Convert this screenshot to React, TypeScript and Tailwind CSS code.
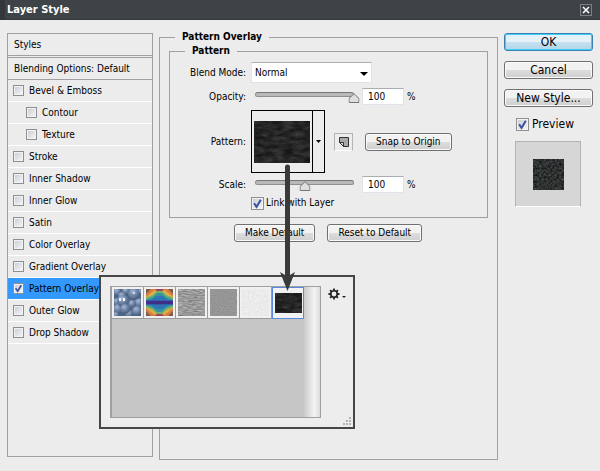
import { useState } from "react";
import type { ReactNode } from "react";

type Effect = { name: string; on?: boolean; nested?: boolean };

const effects: Effect[] = [
  { name: "Bevel & Emboss" },
  { name: "Contour", nested: true },
  { name: "Texture", nested: true },
  { name: "Stroke" },
  { name: "Inner Shadow" },
  { name: "Inner Glow" },
  { name: "Satin" },
  { name: "Color Overlay" },
  { name: "Gradient Overlay" },
  { name: "Pattern Overlay", on: true },
  { name: "Outer Glow" },
  { name: "Drop Shadow" },
];

const patterns = ["bubbles", "tiedye", "woven", "grain", "paper", "leather"];

/* Noise filters shared by all the swatches */
function TextureDefs() {
  return (
    <svg className="absolute size-0" aria-hidden="true">
      <defs>
        <filter id="leatherNoise" x="0" y="0" width="1" height="1" colorInterpolationFilters="sRGB">
          <feTurbulence type="fractalNoise" baseFrequency="0.1 0.25" numOctaves="4" seed="4" />
          <feColorMatrix values="0.22 0 0 0 0.04  0.22 0 0 0 0.04  0.22 0 0 0 0.04  0 0 0 0 1" />
        </filter>
        <filter id="speckNoise" x="0" y="0" width="1" height="1" colorInterpolationFilters="sRGB">
          <feTurbulence type="fractalNoise" baseFrequency="0.45" numOctaves="3" seed="9" />
          <feColorMatrix values="0.36 0 0 0 0  0.36 0 0 0 0.01  0.36 0 0 0 0.01  0 0 0 0 1" />
        </filter>
        <filter id="wovenNoise" x="0" y="0" width="1" height="1" colorInterpolationFilters="sRGB">
          <feTurbulence type="fractalNoise" baseFrequency="0.2 0.8" numOctaves="2" seed="2" />
          <feColorMatrix values="0.4 0 0 0 0.4  0.4 0 0 0 0.4  0.4 0 0 0 0.4  0 0 0 0 1" />
        </filter>
        <filter id="grainNoise" x="0" y="0" width="1" height="1" colorInterpolationFilters="sRGB">
          <feTurbulence type="fractalNoise" baseFrequency="0.8" numOctaves="2" seed="3" />
          <feColorMatrix values="0.15 0 0 0 0.51  0.15 0 0 0 0.51  0.15 0 0 0 0.51  0 0 0 0 1" />
        </filter>
        <filter id="paperNoise" x="0" y="0" width="1" height="1" colorInterpolationFilters="sRGB">
          <feTurbulence type="fractalNoise" baseFrequency="0.5" numOctaves="2" seed="6" />
          <feColorMatrix values="0.1 0 0 0 0.87  0.1 0 0 0 0.87  0.1 0 0 0 0.87  0 0 0 0 1" />
        </filter>
        <radialGradient id="bubble" cx="0.4" cy="0.3" r="0.7">
          <stop offset="0" stopColor="#a3b9d6" />
          <stop offset="0.45" stopColor="#7389ab" />
          <stop offset="1" stopColor="#46597a" />
        </radialGradient>
        <filter id="dyeBleed" x="-0.2" y="-0.2" width="1.4" height="1.4">
          <feGaussianBlur stdDeviation="0.6" />
        </filter>
      </defs>
    </svg>
  );
}

function Leather({ className }: { className: string }) {
  return (
    <svg className={className} aria-hidden="true">
      <rect width="100%" height="100%" filter="url(#leatherNoise)" />
    </svg>
  );
}

function Bubbles() {
  const balls = [
    [3, 3, 4], [12, 2, 4], [8, 7, 4], [25, 14, 5], [3, 13, 4], [26, 3, 3], [20, 5, 6],
    [4, 20, 5], [18, 15, 4], [23, 22, 5], [15, 25, 4], [9, 12, 6], [11, 20, 5], [2, 26, 3],
  ];
  return (
    <svg viewBox="0 0 27 27" className="size-[27px]" aria-hidden="true">
      <rect width="27" height="27" fill="#4f6484" />
      {balls.map(([x, y, r], i) => (
        <circle key={i} cx={x} cy={y} r={r} fill="url(#bubble)" />
      ))}
      <rect x="5" y="9" width="2" height="3" fill="#e4eefb" />
      <rect x="9" y="9" width="2" height="3" fill="#fff" />
      <rect x="19" y="3" width="2" height="2" fill="#c9daf0" />
    </svg>
  );
}

function TieDye() {
  return (
    <svg viewBox="0 0 27 27" className="size-[27px]" aria-hidden="true">
      <rect width="27" height="27" fill="#74604c" />
      <g filter="url(#dyeBleed)">
        <path d="M9 0h9l-4.500 3zM9 27h9l-4.500-3z" fill="#9c4658" />
        <path d="M-1 6 5 0h4l3 3-4 4-9 4zM28 6l-6-6h-4l-3 3 4 4 9 4zM-1 21l6 6h4l3-3-4-4-9-4zM28 21l-6 6h-4l-3-3 4-4 9-4z" fill="#dc7a42" />
        <path d="M0 8 6 3l3-2 2 2-4 4-7 4zM27 8l-6-5-3-2-2 2 4 4 7 4zM0 19l6 5 3 2 2-2-4-4-7-4zM27 19l-6 5-3 2-2-2 4-4 7-4z" fill="#dcb048" />
        <path d="M-1 9 7 6l4-4h5l4 4 8 3v9l-8 3-4 4h-5l-4-4-8-3z" fill="#6fae72" />
        <path d="M-1 11 7 8l4-4h5l4 4 8 3v5l-8 3-4 4h-5l-4-4-8-3z" fill="#36959e" />
        <path d="m5 11 5-4h7l5 4v5l-5 4h-7l-5-4z" fill="#2f74b8" />
      </g>
      <rect y="11" width="27" height="5" fill="#3560a8" />
      <rect y="12" width="27" height="3" fill="#3f2f88" />
    </svg>
  );
}

function Noise({ filter }: { filter: string }) {
  return (
    <svg className="size-[27px]" aria-hidden="true">
      <rect width="27" height="27" filter={`url(#${filter})`} />
    </svg>
  );
}

function Thumbnail({ name }: { name: string }) {
  if (name === "bubbles") return <Bubbles />;
  if (name === "tiedye") return <TieDye />;
  if (name === "woven") return <Noise filter="wovenNoise" />;
  if (name === "grain") return <Noise filter="grainNoise" />;
  if (name === "paper") return <Noise filter="paperNoise" />;
  return <Leather className="h-5 w-[27px]" />;
}

function Checkbox({ id, checked, large }: { id: string; checked?: boolean; large?: boolean }) {
  return (
    <span className={large ? "relative block size-[13px] shrink-0" : "relative block size-[11px] shrink-0"}>
      <input
        id={id}
        type="checkbox"
        defaultChecked={checked}
        className="peer block size-full appearance-none border border-[#8e8f8f] bg-linear-to-br from-[#c6cbd3] to-[#f8f8f8] shadow-[inset_0_0_0_1px_#f2f2f2]"
      />
      <svg
        viewBox="0 0 11 11"
        className="pointer-events-none absolute inset-0 hidden size-full peer-checked:block"
        aria-hidden="true"
      >
        <path d="M2.600 5.300 4.700 8.300 8.300 2.300" fill="none" stroke="#3a53a0" strokeWidth="1.700" />
      </svg>
    </span>
  );
}

function Button({ children, primary, large }: { children: ReactNode; primary?: boolean; large?: boolean }) {
  const look = primary
    ? "border-[#3c7fb1] bg-linear-to-b from-[#e4f1f9] from-50% via-[#c8e2f1] via-50% to-[#b0d5ea] shadow-[inset_0_0_0_1px_#3fd0fa]"
    : "border-[#707070] bg-linear-to-b from-[#f2f2f2] from-50% via-[#dddddd] via-50% to-[#cfcfcf] shadow-[inset_0_0_0_1px_#fafafa]";
  const size = large ? "w-full text-[12px]" : "px-2.5 text-[10px]";
  return (
    <button type="button" className={`flex h-[18px] items-center justify-center rounded-[3px] border whitespace-nowrap ${look} ${size}`}>
      {children}
    </button>
  );
}

function Slider({ id, value, onChange }: { id: string; value: number; onChange: (v: number) => void }) {
  return (
    <div className="relative mx-1 h-3.5 w-[99px]">
      <div className="mt-0.5 h-[5px] rounded-full border border-[#8f8f8f] border-t-[#777] bg-[#b9b9b9]" />
      <svg
        viewBox="0 0 11 10"
        className="absolute top-[3px] h-2.5 w-[11px] -translate-x-1/2"
        style={{ left: `${value}%` }}
        aria-hidden="true"
      >
        <path d="M5.500.7 10.500 5.500v4H.5v-4z" fill="#dedede" stroke="#777" />
      </svg>
      <input
        id={id}
        type="range"
        value={value}
        onChange={(e) => onChange(Number(e.target.value))}
        className="absolute inset-0 size-full opacity-0"
      />
    </div>
  );
}

function PercentRow({ id, label, initial, shown }: { id: string; label: string; initial: number; shown: string }) {
  const [pos, setPos] = useState(initial);
  return (
    <div className="flex h-[17px] items-center">
      <label htmlFor={id} className="mr-[5px] w-[76px] text-right">
        {label}
      </label>
      <Slider id={id} value={pos} onChange={setPos} />
      <input
        type="text"
        aria-label={`${label} percent`}
        defaultValue={shown}
        className="ml-1 h-[17px] w-[42px] border border-[#e2e3ea] border-t-[#abadb3] bg-white pl-[5px]"
      />
      <span className="ml-[3px]">%</span>
    </div>
  );
}

function PatternPicker() {
  return (
    <button type="button" aria-label="Choose pattern" className="flex h-[63px] w-[74px] border border-black">
      <span className="flex h-full flex-1 items-center justify-center">
        <Leather className="h-[42px] w-14" />
      </span>
      <span className="flex h-full w-3 items-center justify-center border-l border-black">
        <svg viewBox="0 0 5 3" className="h-[3px] w-[5px]" aria-hidden="true">
          <path d="M0 0h5L2.500 3z" />
        </svg>
      </span>
    </button>
  );
}

function PatternPopup() {
  return (
    <div className="absolute top-[255px] left-[99px] flex h-[154px] w-64 border-2 border-[#464646] bg-[#ededed] p-[9px]">
      <div className="flex w-[211px] border border-l-2 border-[#a0a0a0]">
        <div className="flex flex-1 items-start bg-[#c6c6c6]">
          {patterns.map((p) => (
            <button
              key={p}
              type="button"
              aria-label={p}
              className={
                p === "leather"
                  ? "flex size-8 items-center justify-center border border-[#5a87e0] bg-[#f2f2f2]"
                  : "flex size-8 items-center justify-center border-r border-b border-[#9c9c9c] bg-[#f0f0f0]"
              }
            >
              <Thumbnail name={p} />
            </button>
          ))}
        </div>
        <div className="w-4 bg-linear-to-r from-[#cacaca] via-[#f4f4f4] via-65% to-[#dcdcdc]" />
      </div>
      <button type="button" aria-label="Pattern menu" className="ml-[7px] flex h-4 items-center gap-0.5">
        <svg viewBox="0 0 12 12" className="size-3" aria-hidden="true">
          <circle cx="6" cy="6" r="3.200" fill="none" stroke="#222" strokeWidth="1.600" />
          <path
            d="M6 .5V3M6 9v2.500M.5 6H3M9 6h2.500M2.100 2.100l1.700 1.700M8.200 8.200l1.700 1.700M2.100 9.900l1.700-1.700M8.200 3.800l1.700-1.700"
            stroke="#222"
            strokeWidth="1.800"
          />
        </svg>
        <svg viewBox="0 0 4 2" className="mt-1.5 h-0.5 w-1" aria-hidden="true">
          <path d="M0 0h4L2 2z" fill="#222" />
        </svg>
      </button>
      <svg viewBox="0 0 8 8" className="absolute right-0.5 bottom-0.5 size-2" fill="#b4b4b4" aria-hidden="true">
        <path d="M6 0h2v2H6zM3 3h2v2H3zM6 3h2v2H6zM0 6h2v2H0zM3 6h2v2H3zM6 6h2v2H6z" />
      </svg>
    </div>
  );
}

export default function App() {
  return (
    <div className="flex min-h-screen flex-col bg-[#ececec] font-['DejaVu_Sans_Condensed','DejaVu_Sans',sans-serif] text-[10px] leading-[14px] text-black">
      <TextureDefs />
      <header className="flex h-5 items-center justify-between border-b border-l-[5px] border-[#33373a] bg-[#3d4347] pr-2 pl-0.5 text-white">
        <h1 className="text-[11px] font-bold">Layer Style</h1>
        <button type="button" aria-label="Close" className="flex size-3 items-center justify-center border border-[#7c8184]">
          <svg viewBox="0 0 8 8" className="size-2" aria-hidden="true">
            <path d="m1 1 6 6M7 1 1 7" stroke="#fff" strokeWidth="1.600" />
          </svg>
        </button>
      </header>

      <main className="relative flex flex-1 items-stretch pr-[7px] pb-[11px] pl-[7px]">
        <aside className="mt-[13px] mb-[3px] w-[146px] shrink-0 border border-[#a0a0a0]">
          <div className="flex h-[22px] items-center border-b border-[#a0a0a0] pl-1.5">Styles</div>
          <div className="mt-px flex h-[23px] items-center border-y border-[#a0a0a0] pl-1.5">Blending Options: Default</div>
          <ul>
            {effects.map((e) => (
              <li
                key={e.name}
                className={`flex h-[22px] items-center gap-[5px] border-b border-white ${e.nested ? "pl-[18px]" : "pl-[5px]"} ${e.on ? "bg-[#3399ff]" : ""}`}
              >
                <Checkbox id={e.name} checked={e.on} />
                <label htmlFor={e.name}>{e.name}</label>
              </li>
            ))}
          </ul>
        </aside>

        <fieldset className="mt-2.5 ml-1.5 min-w-0 flex-1 border border-[#a0a0a0] px-[9px]">
          <legend className="ml-1.5 px-[7px] font-bold">Pattern Overlay</legend>
          <fieldset className="border border-[#a0a0a0] pt-1 pb-[7px]">
            <legend className="ml-[15px] px-[7px] font-bold">Pattern</legend>
            <div className="flex flex-col gap-[3px]">
              <div className="flex flex-col gap-[5px]">
                <div className="flex h-[21px] items-center">
                  <label htmlFor="blend" className="mr-[5px] w-[76px] text-right">
                    Blend Mode:
                  </label>
                  <span className="relative h-[21px] w-[121px]">
                    <select
                      id="blend"
                      className="size-full appearance-none border border-[#e2e3ea] border-t-[#abadb3] bg-white pl-[3px]"
                    >
                      <option>Normal</option>
                    </select>
                    <svg
                      viewBox="0 0 8 4"
                      className="pointer-events-none absolute top-2.5 right-1 h-1 w-2"
                      aria-hidden="true"
                    >
                      <path d="M0 0h8L4 4z" />
                    </svg>
                  </span>
                </div>
                <PercentRow id="opacity" label="Opacity:" initial={100} shown="100" />
                <div className="flex items-center">
                  <span className="mr-[5px] w-[76px] text-right">Pattern:</span>
                  <PatternPicker />
                  <button
                    type="button"
                    aria-label="New preset"
                    className="mr-3 ml-[9px] flex h-[18px] w-[19px] items-center justify-center border border-[#b4b4b4] border-b-white"
                  >
                    <svg viewBox="0 0 10 10" className="size-2.5" aria-hidden="true">
                      <path d="M.5.500h9v9h-5l-4-4z" fill="#a8a8a8" stroke="#333" />
                      <path d="M.5 5.500h4v4z" fill="#ddd" stroke="#333" />
                    </svg>
                  </button>
                  <Button>Snap to Origin</Button>
                </div>
              </div>
              <PercentRow id="scale" label="Scale:" initial={50} shown="100" />
              <div className="ml-[81px] flex items-center gap-0.5">
                <Checkbox id="link" checked large />
                <label htmlFor="link">Link with Layer</label>
              </div>
            </div>
          </fieldset>
          <div className="mt-1.5 ml-[65px] flex gap-3">
            <Button>Make Default</Button>
            <Button>Reset to Default</Button>
          </div>
        </fieldset>

        <div className="mt-[13px] ml-1.5 flex w-[89px] shrink-0 flex-col gap-2.5">
          <Button primary large>OK</Button>
          <Button large>Cancel</Button>
          <Button large>New Style...</Button>
          <div className="ml-3 flex items-center gap-[3px] text-[12px]">
            <Checkbox id="preview" checked large />
            <label htmlFor="preview">Preview</label>
          </div>
          <div className="ml-[11px] flex size-[66px] items-center justify-center border border-[#b4b4b4] border-b-white bg-[#d6d6d6]">
            <svg className="size-[31px]" aria-hidden="true">
              <rect width="31" height="31" filter="url(#speckNoise)" />
            </svg>
          </div>
        </div>

        <PatternPopup />

        {/* Pointer from the current pattern to its thumbnail */}
        <svg viewBox="0 0 16 128" className="pointer-events-none absolute top-36 left-[280px] h-32 w-4" aria-hidden="true">
          <path d="M5 3a2.500 2.500 0 0 1 5 0v108l5-3-7.500 19L0 108l5 3z" fill="#3a3a3a" />
        </svg>
      </main>
    </div>
  );
}
